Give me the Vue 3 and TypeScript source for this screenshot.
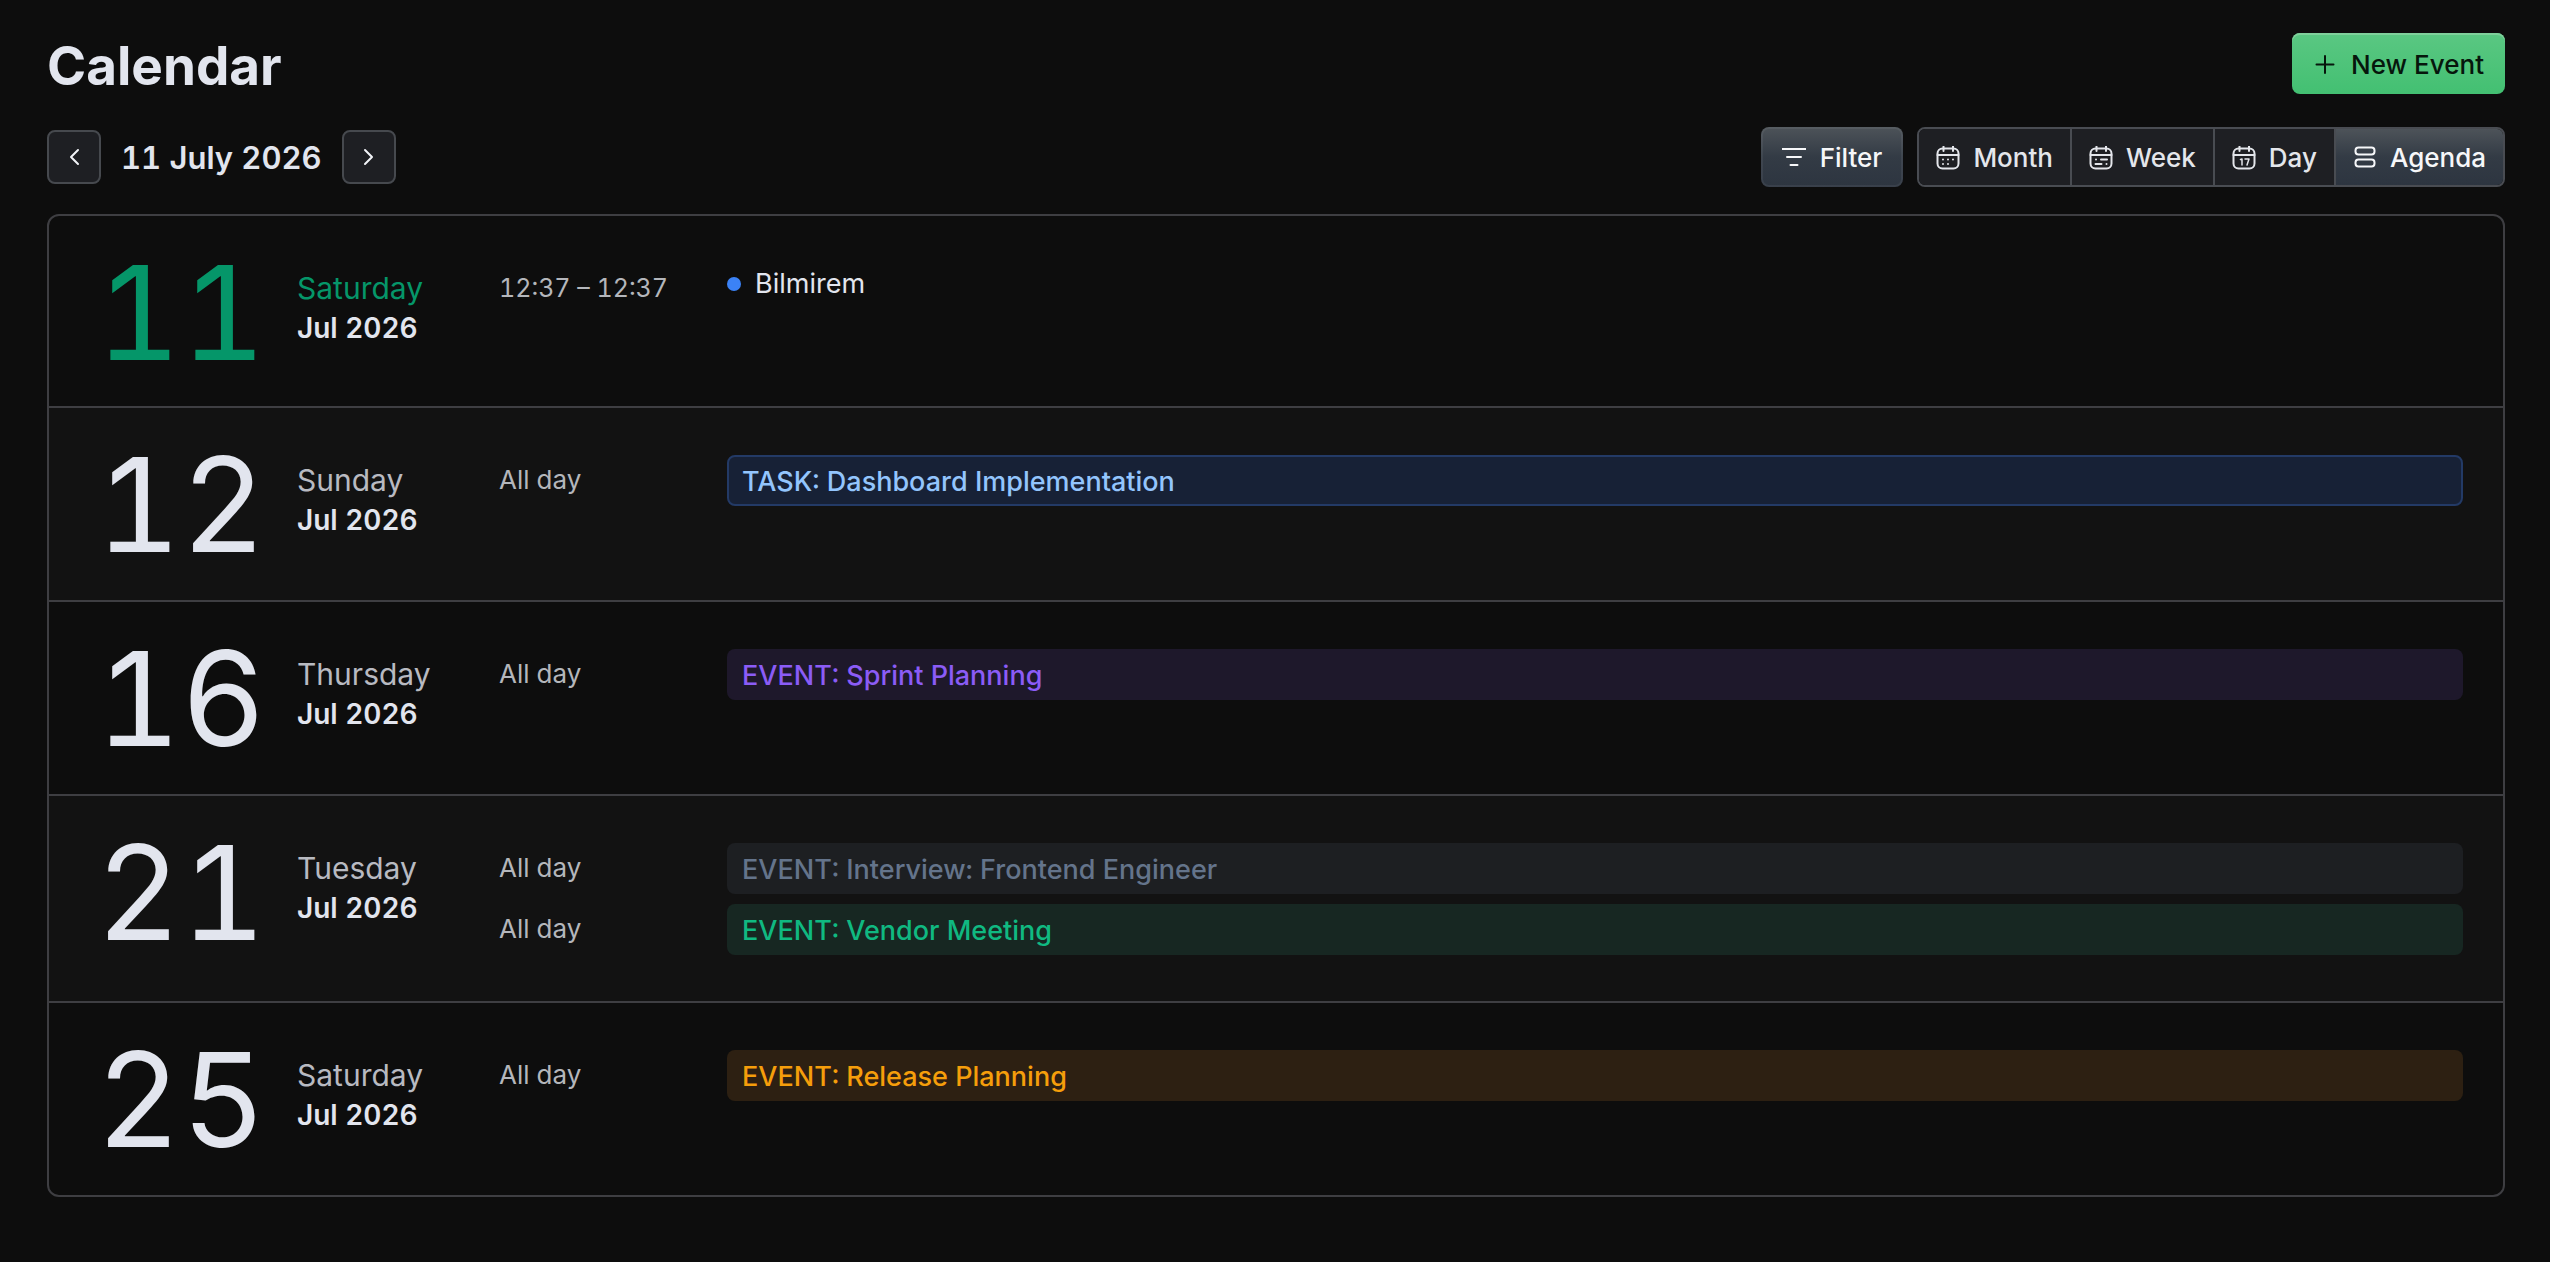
<script setup lang="ts">
import { ref } from 'vue'

type Tone = 'blue' | 'violet' | 'slate' | 'green' | 'amber'

interface AgendaEvent {
  time: string
  title: string
  tone: Tone
  timed?: boolean
}

interface AgendaDay {
  day: number
  weekday: string
  today?: boolean
  events: AgendaEvent[]
}

type ViewName = 'Month' | 'Week' | 'Day' | 'Agenda'

const views: ViewName[] = ['Month', 'Week', 'Day', 'Agenda']
const activeView = ref<ViewName>('Agenda')

const days: AgendaDay[] = [
  {
    day: 11,
    weekday: 'Saturday',
    today: true,
    events: [{ time: '12:37 – 12:37', title: 'Bilmirem', tone: 'blue', timed: true }],
  },
  { day: 12, weekday: 'Sunday', events: [{ time: 'All day', title: 'TASK: Dashboard Implementation', tone: 'blue' }] },
  { day: 16, weekday: 'Thursday', events: [{ time: 'All day', title: 'EVENT: Sprint Planning', tone: 'violet' }] },
  {
    day: 21,
    weekday: 'Tuesday',
    events: [
      { time: 'All day', title: 'EVENT: Interview: Frontend Engineer', tone: 'slate' },
      { time: 'All day', title: 'EVENT: Vendor Meeting', tone: 'green' },
    ],
  },
  { day: 25, weekday: 'Saturday', events: [{ time: 'All day', title: 'EVENT: Release Planning', tone: 'amber' }] },
]
</script>

<template>
  <main class="page">
    <header class="head">
      <h1 class="title">Calendar</h1>
      <button type="button" class="btn btn-primary">
        <svg class="icon" viewBox="0 0 24 24" aria-hidden="true"><path d="M12 3v17M3.500 11.500h17" /></svg>
        New Event
      </button>
    </header>

    <div class="toolbar">
      <div class="period">
        <button type="button" class="step" aria-label="Previous">
          <svg class="icon" viewBox="0 0 24 24" aria-hidden="true"><path d="M16 5l-7 7 7 7" /></svg>
        </button>
        <h2 class="date">11 July 2026</h2>
        <button type="button" class="step" aria-label="Next">
          <svg class="icon" viewBox="0 0 24 24" aria-hidden="true"><path d="M8 5l7 7-7 7" /></svg>
        </button>
      </div>
      <div class="controls">
        <button type="button" class="btn btn-filter">
          <svg class="icon" viewBox="0 0 24 24" aria-hidden="true"><path d="M0.500 3h23M5 11h14M8.500 19h7" /></svg>
          Filter
        </button>
        <div class="segments" role="group" aria-label="View">
          <button
            v-for="view in views"
            :key="view"
            type="button"
            class="segment"
            :class="{ active: view === activeView }"
            :aria-pressed="view === activeView"
            @click="activeView = view"
          >
            <svg class="icon" viewBox="0 0 24 24" aria-hidden="true">
              <template v-if="view === 'Agenda'">
                <rect x="2.500" y="1.500" width="19" height="7" rx="3" />
                <rect x="2.500" y="13.500" width="19" height="7" rx="3" />
              </template>
              <template v-else>
                <rect x="1.500" y="2.500" width="21" height="20" rx="5" />
                <path d="M1.500 9h21M7.500 0.500v4.500M17 0.500v4.500" />
                <path v-if="view === 'Month'" d="M7 13.500h0M12 13.500h0M17 13.500h0M7 18h0M12 18h0" />
                <path v-else-if="view === 'Week'" d="M7 13.500h0M12 13.500h6M6.500 18h6M17.500 18h0" />
                <path v-else class="fine" d="M8.500 13.500l1.500-.5v6M13 13h4l-2 6" />
              </template>
            </svg>
            {{ view }}
          </button>
        </div>
      </div>
    </div>

    <ol class="agenda">
      <li v-for="entry in days" :key="entry.day" class="row" :class="{ today: entry.today }">
        <span class="number">{{ entry.day }}</span>
        <div class="label">
          <span class="weekday">{{ entry.weekday }}</span>
          <strong class="month">Jul 2026</strong>
        </div>
        <ul class="events">
          <li v-for="event in entry.events" :key="event.title" class="event">
            <span class="time" :class="{ range: event.timed }">{{ event.time }}</span>
            <span v-if="event.timed" class="timed"><i class="dot"></i>{{ event.title }}</span>
            <span v-else class="chip" :class="event.tone">{{ event.title }}</span>
          </li>
        </ul>
      </li>
    </ol>
  </main>
</template>

<style>
html,
body {
  background: #0d0d0d;
}
</style>

<style scoped>
.page {
  box-sizing: border-box;
  min-height: 100vh;
  padding: 33px 45px 64px 47px;
  background: #0d0d0d;
  color: #e2e5ee;
  font-family: Inter, "Liberation Sans", sans-serif;
  font-size: 26px;
  font-variant-numeric: tabular-nums;
  line-height: 32px;
}

button {
  font: inherit;
  cursor: pointer;
}

.head,
.toolbar,
.period,
.controls {
  display: flex;
  align-items: center;
}

.head,
.toolbar {
  justify-content: space-between;
}

.head {
  align-items: flex-start;
}

.title {
  margin: 0;
  font-size: 53px;
  line-height: 67px;
  font-weight: 700;
}

.icon {
  width: 24px;
  height: 24px;
  flex: none;
  fill: none;
  stroke: currentColor;
  stroke-width: 2;
  stroke-linecap: round;
  stroke-linejoin: round;
}

.fine {
  stroke-width: 1.5;
}

.btn {
  box-sizing: border-box;
  display: flex;
  align-items: center;
  gap: 14px;
  height: 60px;
  padding: 2px 21px 0;
  border: 0;
  border-radius: 8px;
  font-weight: 500;
}

.btn-primary {
  height: 61px;
  background: linear-gradient(#5ac782, #43c072);
  box-shadow: inset 0 2px #7fd09b;
  color: #06160c;
}

.btn-filter {
  background: linear-gradient(#4d5359, #333b45 50%, #2d3540);
  box-shadow: inset 0 0 0 2px #ffffff0f;
  color: #f6f7f9;
}

.toolbar {
  margin-top: 27px;
}

.period {
  gap: 20px;
}

.step {
  display: grid;
  place-items: center;
  width: 54px;
  height: 54px;
  padding: 0;
  border: 2px solid #46494e;
  border-radius: 8px;
  background: #1e1f23;
  color: #f1f3f7;
}

.date {
  margin: 0;
  padding-top: 2px;
  font-size: 31px;
  line-height: 40px;
  font-weight: 600;
}

.controls {
  gap: 14px;
}

.segments {
  box-sizing: border-box;
  display: flex;
  height: 60px;
  border: 2px solid #494c52;
  border-radius: 8px;
  overflow: hidden;
}

.segment {
  display: flex;
  align-items: center;
  gap: 13px;
  padding: 2px 17px 0;
  border: 0;
  background: #1e1f23;
  color: #e4e6eb;
  font-weight: 500;
}

.segment + .segment {
  border-left: 2px solid #494c52;
}

.segment.active {
  background: linear-gradient(#4d5359, #333b45 50%, #2d3540);
  color: #f6f7f9;
}

.agenda,
.events {
  margin: 0;
  padding: 0;
  list-style: none;
}

.agenda {
  margin-top: 27px;
  border: 2px solid #3e3e42;
  border-radius: 12px;
  overflow: hidden;
}

.row {
  display: grid;
  grid-template-columns: 208px 182px 1fr;
  column-gap: 20px;
  box-sizing: border-box;
  min-height: 190px;
  padding: 47px 40px 46px 20px;
}

.row + .row {
  min-height: 194px;
  border-top: 2px solid #3e3e42;
}

.row:nth-child(even) {
  background: #121212;
}

.number {
  padding: 4px 0 0 16px;
  font-size: 131px;
  line-height: 92px;
  text-align: center;
}

.label {
  display: flex;
  flex-direction: column;
  padding-top: 5px;
  font-size: 30px;
  line-height: 40px;
}

.weekday {
  color: #b8bac1;
}

.month {
  font-size: 28px;
  font-weight: 600;
}

.today .number,
.today .weekday {
  color: #059669;
}

.events {
  display: grid;
  align-content: start;
  gap: 10px;
}

.event {
  display: grid;
  grid-template-columns: 228px 1fr;
}

.time {
  line-height: 50px;
  color: #b4b6bb;
}

.range {
  font-size: 25px;
}

.timed {
  display: flex;
  align-items: center;
  gap: 14px;
  height: 42px;
  font-size: 27px;
}

.dot {
  width: 14px;
  height: 14px;
  border-radius: 50%;
  background: #3b82f6;
}

.chip {
  box-sizing: border-box;
  height: 51px;
  padding: 0 13px;
  border: 2px solid transparent;
  border-radius: 8px;
  font-size: 27px;
  line-height: 49px;
  font-weight: 500;
}

.blue {
  border-color: #233a66;
  background: #172136;
  color: #93c5fd;
}

.violet {
  background: #1e182b;
  color: #8b5cf6;
}

.slate {
  background: #1d1f22;
  color: #64748b;
}

.green {
  background: #172722;
  color: #10b981;
}

.amber {
  background: #2d2012;
  color: #f59e0b;
}
</style>
